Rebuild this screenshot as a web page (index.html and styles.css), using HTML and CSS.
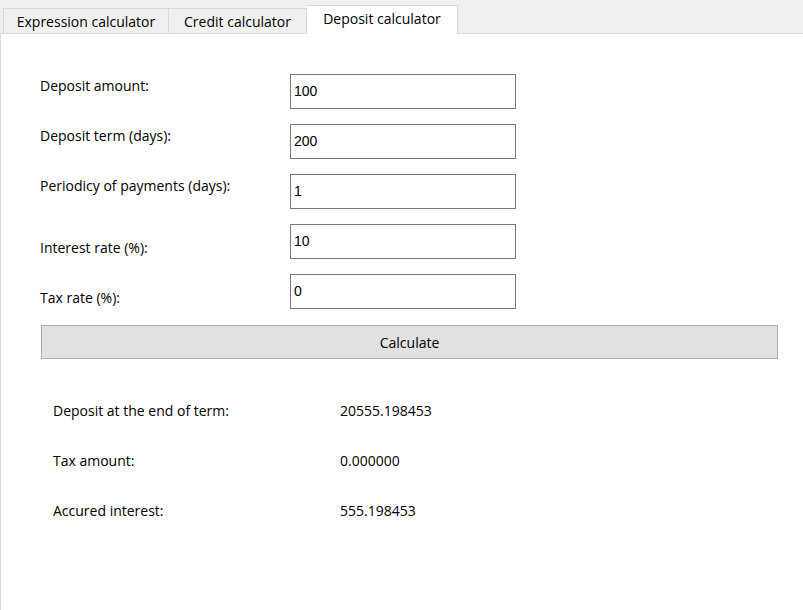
FILE: index.html
```html
<!DOCTYPE html>
<html>
<head>
<meta charset="utf-8">
<link rel="stylesheet" href="styles.css">
</head>
<body>
<div class="tabs">
  <div class="tab tab1">Expression calculator</div>
  <div class="tab tab2">Credit calculator</div>
  <div class="tab tab3 active">Deposit calculator</div>
</div>
<div class="panel">
  <div class="form">
    <div class="lbl">Deposit amount:</div>
    <div class="field">100</div>
    <div class="lbl">Deposit term (days):</div>
    <div class="field">200</div>
    <div class="lbl">Periodicy of payments (days):</div>
    <div class="field">1</div>
    <div class="lbl low">Interest rate (%):</div>
    <div class="field">10</div>
    <div class="lbl low">Tax rate (%):</div>
    <div class="field">0</div>
  </div>
  <button class="calc">Calculate</button>
  <div class="results">
    <div class="rl">Deposit at the end of term:</div>
    <div class="rv">20555.198453</div>
    <div class="rl">Tax amount:</div>
    <div class="rv">0.000000</div>
    <div class="rl">Accured interest:</div>
    <div class="rv">555.198453</div>
  </div>
</div>
</body>
</html>
```
FILE: styles.css
```css
html, body {
  margin: 0;
  padding: 0;
  height: 100%;
}
body {
  background: #f0f0f0;
  font-family: "Open Sans", "Noto Sans", sans-serif;
  font-size: 14px;
  color: #000;
  display: flex;
  flex-direction: column;
}
.tabs {
  display: flex;
  align-items: flex-end;
  height: 34px;
  box-sizing: border-box;
  border-bottom: 1px solid #d9d9d9;
  padding-left: 3px;
  flex: none;
}
.tab {
  box-sizing: border-box;
  height: 25px;
  border: 1px solid #d9d9d9;
  border-bottom: none;
  background: #f0f0f0;
  text-align: center;
  line-height: 24px;
  padding-top: 1px;
  white-space: nowrap;
}
.tab1 { width: 166px; }
.tab2 { width: 138px; border-left: none; }
.tab3 { width: 151px; border-left: none; }
.tab.active {
  height: 29px;
  margin-bottom: -1px;
  background: #fff;
  line-height: 24px;
  padding-top: 1px;
}
.panel {
  flex: 1;
  background: #fff;
  border-left: 1px solid #d9d9d9;
  padding: 40px 0 0 39px;
}
.form {
  display: grid;
  grid-template-columns: 250px 226px;
  grid-auto-rows: 35px;
  row-gap: 15px;
}
.lbl {
  line-height: 20px;
  padding-top: 2px;
}
.lbl.low {
  padding-top: 14px;
}
.field {
  box-sizing: border-box;
  border: 1px solid #7a7a7a;
  font-family: "Liberation Sans", Arial, sans-serif;
  font-size: 14px;
  padding: 0 3px;
  line-height: 33px;
}
.calc {
  display: block;
  margin: 16px 0 0 1px;
  width: 737px;
  height: 34px;
  background: #e1e1e1;
  border: 1px solid #adadad;
  font-family: inherit;
  font-size: 14px;
  color: #000;
  padding: 0;
}
.results {
  display: grid;
  grid-template-columns: 287px auto;
  grid-auto-rows: 20px;
  row-gap: 30px;
  margin: 42px 0 0 13px;
  line-height: 20px;
}
```
